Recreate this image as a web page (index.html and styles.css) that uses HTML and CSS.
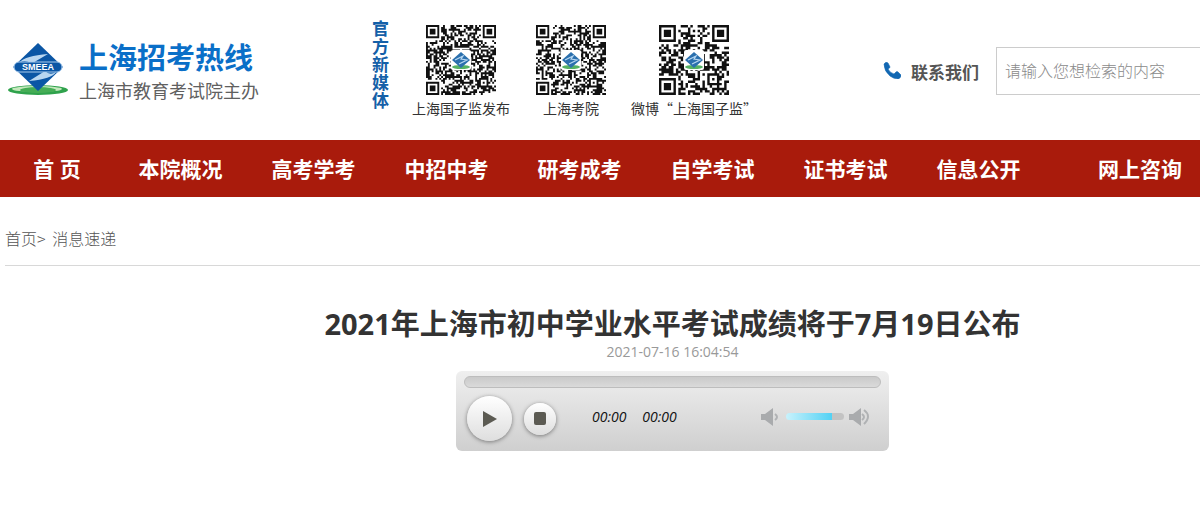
FILE: index.html
```html
<!DOCTYPE html>
<html lang="zh-CN">
<head>
<meta charset="utf-8">
<meta name="viewport" content="width=device-width, initial-scale=1">
<title>上海招考热线</title>
<link rel="stylesheet" href="styles.css">
</head>
<body>
<header class="header">
  <a class="brand" href="#">
    <svg class="brand-mark" viewBox="0 0 62 56" aria-hidden="true">
      <ellipse cx="31" cy="48" rx="30" ry="5" fill="#2fa24c"/>
      <ellipse cx="30" cy="47" rx="25" ry="3" fill="#c5e8bd"/>
      <ellipse cx="31" cy="48" rx="18" ry="3" fill="#45ad55"/>
      <path d="M31 1 56 25 31 49 6 25z" fill="#0b56a5"/>
      <path d="M13 20Q18 14 41 12L24 22Q20 17 13 20z" fill="#b9d6f0"/>
      <path d="M49 30Q45 37 22 39L38 29Q43 34 49 30z" fill="#b9d6f0"/>
      <rect x="7" y="20" width="48" height="10" rx="5" fill="#0b56a5" stroke="#a9cbed"/>
      <text class="mark-text" x="31" y="28" text-anchor="middle">SMEEA</text>
    </svg>
    <span class="brand-words">
      <strong class="brand-name">上海招考热线</strong>
      <span class="brand-host">上海市教育考试院主办</span>
    </span>
  </a>
  <section class="media">
    <h2 class="media-title">官方新媒体</h2>
    <figure class="qr"><svg class="qr-code" data-size="37" data-seed="19" role="img" aria-label="二维码"></svg><figcaption>上海国子监发布</figcaption></figure>
    <figure class="qr"><svg class="qr-code" data-size="37" data-seed="83" role="img" aria-label="二维码"></svg><figcaption>上海考院</figcaption></figure>
    <figure class="qr"><svg class="qr-code" data-size="29" data-seed="47" role="img" aria-label="二维码"></svg><figcaption>微博“上海国子监”</figcaption></figure>
  </section>
  <a class="contact" href="#">
    <svg class="phone" viewBox="0 0 18 17" aria-hidden="true"><path d="M1 2Q3-1 5 1l2 4q0 1-2 2 2 4 6 5l2-2q1-1 2 0l3 3q0 3-3 4-4 0-8-3Q1 9 1 2z" fill="#1268b3" stroke="#1268b3" stroke-width=".6"/></svg>
    联系我们
  </a>
  <form class="search"><input class="search-box" type="text" aria-label="检索" placeholder="请输入您想检索的内容"></form>
</header>
<nav class="nav">
  <a href="#">首 页</a><a href="#">本院概况</a><a href="#">高考学考</a><a href="#">中招中考</a><a href="#">研考成考</a><a href="#">自学考试</a><a href="#">证书考试</a><a href="#">信息公开</a><a class="nav-last" href="#">网上咨询</a>
</nav>
<main class="main">
  <div class="crumbs"><a href="#">首页</a>&gt; <a class="crumb" href="#">消息速递</a></div>
  <article class="article">
    <h1 class="title">2021年上海市初中学业水平考试成绩将于7月19日公布</h1>
    <time class="date">2021-07-16 16:04:54</time>
    <section class="player" aria-label="音频播放">
      <div class="seek"></div>
      <div class="controls">
        <button class="round play" type="button" aria-label="播放"><svg viewBox="0 0 16 18" width="16" height="18"><path d="M1 1 15 9 1 17z" fill="#5c5b53"/></svg></button>
        <button class="round stop" type="button" aria-label="停止"><svg viewBox="0 0 12 13" width="12" height="13"><rect width="12" height="13" rx="2" fill="#5c5b53"/></svg></button>
        <span class="times"><span>00:00</span><span>00:00</span></span>
        <span class="volume">
          <svg viewBox="0 0 20 18" width="20" height="18" aria-hidden="true"><path d="M0 6h4l8-6v18l-8-6H0z" fill="#a9abad"/><path d="M14 6q4 3 0 6" fill="none" stroke="#b0b2b4" stroke-width="2"/></svg>
          <input class="level" type="range" min="0" max="100" value="80" aria-label="音量">
          <svg viewBox="0 0 22 18" width="22" height="18" aria-hidden="true"><path d="M0 6h4l8-6v18l-8-6H0z" fill="#a9abad"/><path d="M13 6q4 3 0 6M15 2q8 6 0 14" fill="none" stroke="#b0b2b4" stroke-width="2"/></svg>
        </span>
      </div>
    </section>
  </article>
</main>
<script src="qr.js"></script>
</body>
</html>
```
FILE: styles.css
```css
* { box-sizing: border-box; }
body {
  margin: 0;
  background: #fff;
  color: #333;
  font-family: "Open Sans", "Noto Sans CJK SC", sans-serif;
}
a { color: inherit; text-decoration: none; }

.header { display: flex; height: 140px; }
.brand { display: flex; flex: 0 0 366px; gap: 10px; padding: 42px 0 0 7px; }
.brand-mark { width: 62px; height: 56px; }
.mark-text { font: bold 9px "Liberation Sans", sans-serif; fill: #fff; }
.brand-words { display: flex; flex-direction: column; white-space: nowrap; }
.brand-name { font-size: 29px; line-height: 32px; color: #0a6fc8; }
.brand-host { font-family: "Noto Sans CJK SC", sans-serif; font-size: 18px; line-height: 32px; color: #606060; }

.media { display: flex; flex: 1 0 auto; padding-top: 20px; }
.media-title { width: 28px; margin: 0; padding: 0 6px; font-size: 17px; line-height: 18px; color: #1460a8; }
.qr { width: 110px; margin: 0; text-align: center; }
.qr:nth-of-type(1) { margin-left: 12px; }
.qr:nth-of-type(3) { width: 136px; }
.qr-code { display: block; width: 70px; height: 70px; margin: 5px auto 0; }
.qr figcaption { font: 14px/26px "Noto Sans CJK SC", sans-serif; white-space: nowrap; }

.contact { display: flex; gap: 10px; padding-top: 62px; font-size: 17px; line-height: 22px; font-weight: bold; color: #555; white-space: nowrap; }
.phone { width: 18px; height: 17px; }
.search { flex: 0 0 204px; margin: 47px 0 0 17px; }
.search-box { width: 100%; height: 48px; padding: 0 8px 3px; border: 1px solid #ccc; border-right: 0; border-radius: 0; font: 300 16px "Noto Sans CJK SC", sans-serif; color: #555; }
.search-box::placeholder { color: #8a8a8a; }

.nav { display: grid; grid-template-columns: 114fr repeat(7, 133fr) 155fr; padding-top: 1px; background: #a91b0c; color: #fff; font-size: 21px; font-weight: bold; line-height: 56px; text-align: center; white-space: nowrap; }
.nav .nav-last { padding-right: 18px; text-align: right; }

.main { padding-left: 5px; }
.crumbs { padding: 27px 0 12px; border-bottom: 1px solid #d8d8d8; font: 300 16px/29px "Noto Sans CJK SC", sans-serif; color: #555; }
.crumb { margin-left: 3px; }
.article { display: flex; flex-direction: column; align-items: center; padding: 38px 0 58px 140px; }
.title { margin: 0; font-size: 29px; line-height: 40px; white-space: nowrap; }
.date { font-size: 14px; line-height: 16px; color: #999; }

.player { width: 433px; height: 80px; margin-top: 11px; padding: 5px 8px; border-radius: 6px; background: linear-gradient(#efefef, #cfcfcf); }
.seek { height: 12px; border: 1px solid #bdbdbd; border-radius: 6px; background: linear-gradient(#cacaca, #dadada); }
.controls { display: flex; align-items: center; padding: 8px 10px 0 3px; }
.round { display: grid; place-items: center; padding: 0; border: 0; border-radius: 50%; background: linear-gradient(#fff, #dedede); box-shadow: 0 1px 4px #777; }
.play { width: 45px; height: 45px; }
.stop { width: 32px; height: 32px; margin-left: 12px; }
.times { display: flex; gap: 16px; margin-left: 36px; padding-bottom: 4px; font: italic 14px/20px "Open Sans", sans-serif; color: #111; }
.volume { display: flex; align-items: center; gap: 5px; margin-left: auto; padding-bottom: 4px; }
.level { width: 58px; height: 7px; margin: 0; appearance: none; border-radius: 4px; background: linear-gradient(90deg, #c8f2fc, #51d1f4 80%, #c3c3c3 80%); }
.level::-webkit-slider-thumb { appearance: none; width: 1px; height: 7px; background: transparent; }
```
FILE: qr.js
```js
// Draws a code pattern with three finder squares and a central emblem.
document.querySelectorAll(".qr-code").forEach((svg) => {
  const n = Number(svg.dataset.size);
  let seed = Number(svg.dataset.seed);
  const next = () => (seed = (seed * 16807) % 2147483647) / 2147483647;
  for (let i = 0; i < 9; i++) next();
  const finder = (x, y) => {
    for (const [cx, cy] of [[3, 3], [n - 4, 3], [3, n - 4]]) {
      const d = Math.max(Math.abs(x - cx), Math.abs(y - cy));
      if (d <= 4) return d === 3 || d <= 1 ? 1 : 0;
    }
    const a = Math.max(Math.abs(x - n + 7), Math.abs(y - n + 7));
    if (a <= 2) return a === 1 ? 0 : 1;
    return -1;
  };
  let d = "";
  for (let y = 0; y < n; y++) {
    for (let x = 0; x < n; x++) {
      const f = finder(x, y);
      const on = f < 0 ? next() < 0.52 : f;
      if (on) d += `M${x} ${y}h1v1h-1z`;
    }
  }
  svg.setAttribute("viewBox", `0 0 ${n} ${n}`);
  svg.innerHTML = `<path d="${d}" fill="#111"/>
    <g transform="translate(${n / 2} ${n / 2}) scale(${n / 70})">
      <rect x="-10" y="-10" width="20" height="20" rx="2" fill="#fff"/>
      <ellipse cy="7" rx="9" ry="2" fill="#55b264"/>
      <path d="M0-8 9 0 0 8-9 0z" fill="#2b70ae"/>
      <path d="M-6 0 2-4 0-1 6 0-2 4" fill="none" stroke="#b9d8f2" stroke-width="1.2"/>
    </g>`;
});
```
